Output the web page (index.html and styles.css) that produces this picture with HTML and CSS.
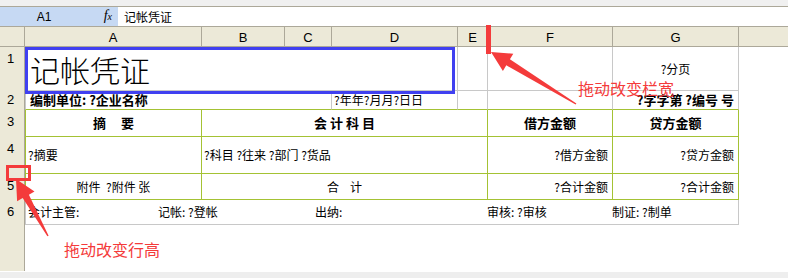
FILE: index.html
```html
<!DOCTYPE html>
<html lang="zh-CN">
<head>
	<meta charset="UTF-8">
	<title>记帐凭证</title>
	<link rel="stylesheet" href="styles.css">
</head>
<body>
	<div class="topband"></div>
	<div class="fbar">
		<div class="namebox">
			<span class="cellname">A1</span>
			<span class="fx">f<span class="fx_x">x</span></span>
		</div>
		<div class="ftext">记帐凭证</div>
	</div>

	<div class="sheet">
		<!-- 列标题 -->
		<div class="hd"></div>
		<div class="hd">A</div>
		<div class="hd">B</div>
		<div class="hd">C</div>
		<div class="hd">D</div>
		<div class="hd">E</div>
		<div class="hd">F</div>
		<div class="hd">G</div>
		<div class="hd hd_last"></div>

		<!-- 第1行 -->
		<div class="rh">1</div>
		<div class="c ca span4 title">记帐凭证</div>
		<div class="c"></div>
		<div class="c"></div>
		<div class="c ctr">?分页</div>
		<div class="blank"></div>

		<!-- 第2行 -->
		<div class="rh rh_short">2</div>
		<div class="c ca span3 r2 b">编制单位: ?企业名称</div>
		<div class="c r2 l">?年年?月月?日日</div>
		<div class="c r2"></div>
		<div class="c r2"></div>
		<div class="c r2 rt b">?字字第 ?编号 号</div>
		<div class="blank"></div>

		<!-- 第3行 -->
		<div class="rh">3</div>
		<div class="c g ca ctr b"><span class="sp_wide">摘要</span></div>
		<div class="c g span4 ctr b"><span class="sp_mid">会计科目</span></div>
		<div class="c g ctr b">借方金额</div>
		<div class="c g ctr b">贷方金额</div>
		<div class="blank"></div>

		<!-- 第4行 -->
		<div class="rh">4</div>
		<div class="c g ca l">?摘要</div>
		<div class="c g span4 l">?科目 ?往来 ?部门 ?货品</div>
		<div class="c g rt">?借方金额</div>
		<div class="c g rt">?贷方金额</div>
		<div class="blank"></div>

		<!-- 第5行 -->
		<div class="rh">5</div>
		<div class="c g ca ctr pre">附件  ?附件 张</div>
		<div class="c g span4 ctr"><span class="sp_sum">合计</span></div>
		<div class="c g rt">?合计金额</div>
		<div class="c g rt">?合计金额</div>
		<div class="blank"></div>

		<!-- 第6行 -->
		<div class="rh">6</div>
		<div class="c ca span7 sign">
			<span class="sg sg1">会计主管:</span>
			<span class="sg sg2">记帐: ?登帐</span>
			<span class="sg sg3">出纳:</span>
			<span class="sg sg4">审核: ?审核</span>
			<span class="sg">制证: ?制单</span>
		</div>
		<div class="blank"></div>

		<div class="rh"></div>
		<div class="blank span8"></div>
	</div>
	<div class="bottomband"></div>

	<!-- 标注 -->
	<svg class="marks" width="788" height="278" viewBox="0 0 788 278">
		<rect x="26.5" y="48.5" width="427" height="44" fill="none" stroke="#4040f0" stroke-width="3"/>
		<rect x="486" y="25" width="5" height="29" fill="#f43b3b"/>
		<polygon fill="#f43b3b" points="491,52 513.3,53.7 509.9,59.3 576.4,103.4 575.6,104.6 506.3,65.3 502.9,70.9"/>
		<rect x="7.5" y="166.5" width="22" height="13" fill="none" stroke="#f43b3b" stroke-width="3"/>
		<polygon fill="#f43b3b" points="16,179 34.5,191.5 28.9,194.7 48.6,235.7 47.4,236.3 22.7,198.1 17.1,201.3"/>
	</svg>
	<div class="note note_col">拖动改变栏宽</div>
	<div class="note note_row">拖动改变行高</div>
</body>
</html>
```

FILE: styles.css
```css
*{
	margin:0;
	padding:0;
	box-sizing:border-box;
}

body{
	width:788px;
	height:278px;
	position:relative;
	overflow:hidden;
	background-color:#fff;
	font-family:"Noto Sans CJK SC","Liberation Sans",sans-serif;
	font-size:12px;
	line-height:14px;
	color:#000;
}

.topband{
	height:7px;
	background-color:#f0f0f0;
	border-bottom:1px solid #aca899;
}

.fbar{
	display:flex;
	height:20px;
	border-bottom:1px solid #aca899;
}

.namebox{
	width:118px;
	display:flex;
	align-items:center;
	background-color:#c6d9f3;
}

.cellname{
	width:88px;
	text-align:center;
	font-family:"Liberation Sans",sans-serif;
	font-size:12px;
}

.fx{
	width:30px;
	text-align:right;
	padding-right:6px;
	font-family:"Liberation Serif",serif;
	font-style:italic;
	font-size:14px;
}

.fx_x{
	font-size:10px;
}

.ftext{
	flex:1;
	display:flex;
	align-items:center;
	padding-left:6px;
}

.sheet{
	display:grid;
	grid-template-columns:25px 177px 83px 47px 126px 30px 125px 126px 1fr;
	grid-template-rows:20px 44px 19px 27px 37px 26px 25px 46px;
}

.hd{
	background-color:#ece9d8;
	border-right:1px solid #aca899;
	border-bottom:1px solid #aca899;
	font-family:"Liberation Sans",sans-serif;
	font-size:13px;
	text-align:center;
	padding-top:4px;
}

.hd_last{
	border-right:0;
}

.rh{
	background-color:#ece9d8;
	border-right:1px solid #aca899;
	font-family:"Liberation Sans",sans-serif;
	font-size:13px;
	line-height:24px;
	text-align:center;
	padding-right:3px;
}

.rh_short{
	line-height:18px;
}

.c{
	display:flex;
	align-items:center;
	padding:0 4px;
	white-space:nowrap;
	border-right:1px solid #c8c8c8;
	border-bottom:1px solid #c8c8c8;
}

.ca{
	border-left:1px solid #c8c8c8;
}

.g{
	border-color:#a4c234;
}

.r2{
	border-bottom-color:#a4c234;
}

.span3{ grid-column:span 3; }
.span4{ grid-column:span 4; }
.span7{ grid-column:span 7; }
.span8{ grid-column:span 8; }

.l{ justify-content:flex-start; padding-left:2px; }
.ctr{ justify-content:center; }
.rt{ justify-content:flex-end; }
.b{ font-weight:bold; font-size:13px; }
.pre{ white-space:pre; }

.title{
	font-size:30px;
	line-height:34px;
	padding-left:4px;
	font-weight:300;
}

.sp_wide{
	letter-spacing:15px;
	padding-left:15px;
}

.sp_mid{
	letter-spacing:3px;
	padding-left:3px;
}

.sp_sum{
	letter-spacing:11px;
	padding-left:11px;
}

.sign{
	padding-left:2px;
	border-left-color:#c8c8c8;
}

.sg{
	display:inline-block;
}
.sg1{ width:130px; }
.sg2{ width:157px; }
.sg3{ width:172px; }
.sg4{ width:125px; }

.bottomband{
	position:absolute;
	left:0;
	top:272px;
	width:788px;
	height:6px;
	background-color:#eeeeee;
}

.marks{
	position:absolute;
	left:0;
	top:0;
	pointer-events:none;
}

.note{
	position:absolute;
	color:#f43b3b;
	font-size:16px;
	line-height:18px;
	white-space:nowrap;
}

.note_col{
	left:578px;
	top:79px;
}

.note_row{
	left:64px;
	top:240px;
}
```
